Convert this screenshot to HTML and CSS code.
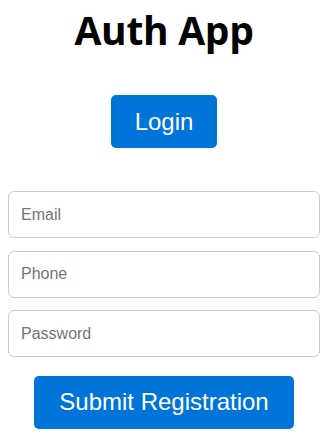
FILE: index.html
```html
<!DOCTYPE html>
<html lang="en">
<head>
<meta charset="utf-8">
<title>Auth App</title>
<link rel="stylesheet" href="styles.css">
</head>
<body>
<main class="app">
  <h1 class="title">Auth App</h1>
  <button class="btn btn-login" type="button">Login</button>
  <form class="form">
    <input class="field" type="email" placeholder="Email">
    <input class="field" type="tel" placeholder="Phone">
    <input class="field" type="password" placeholder="Password">
    <button class="btn btn-submit" type="button">Submit Registration</button>
  </form>
</main>
</body>
</html>
```

FILE: styles.css
```css
html, body {
  margin: 0;
  padding: 0;
  background: #ffffff;
}

body {
  font-family: "Liberation Sans", Arial, sans-serif;
  color: #000;
}

.app {
  display: flex;
  flex-direction: column;
  align-items: center;
  padding: 0 10px 0 8px;
}

.title {
  margin: 0;
  font-family: "Open Sans", "Noto Sans", sans-serif;
  font-weight: 700;
  font-size: 39px;
  line-height: 60px;
  letter-spacing: -0.3px;
}

.btn {
  border: 0;
  border-radius: 5px;
  background: #0074d9;
  color: #ffffff;
  font-family: "Liberation Sans", Arial, sans-serif;
  font-size: 24px;
  height: 53px;
  padding: 0 24px;
  cursor: pointer;
}

.btn-login {
  margin-top: 35px;
}

.form {
  margin-top: 43px;
  width: 312px;
  display: flex;
  flex-direction: column;
  align-items: center;
  gap: 12.5px;
}

.field {
  box-sizing: border-box;
  width: 312px;
  height: 47px;
  border: 1px solid #cccccc;
  border-radius: 6px;
  padding: 0 12px;
  font-family: "Liberation Sans", Arial, sans-serif;
  font-size: 16px;
  color: #000;
  background: #fff;
  outline: none;
}

.field::placeholder {
  color: #757575;
}

.btn-submit {
  margin-top: 6px;
  width: 260px;
  padding: 0;
}
```
